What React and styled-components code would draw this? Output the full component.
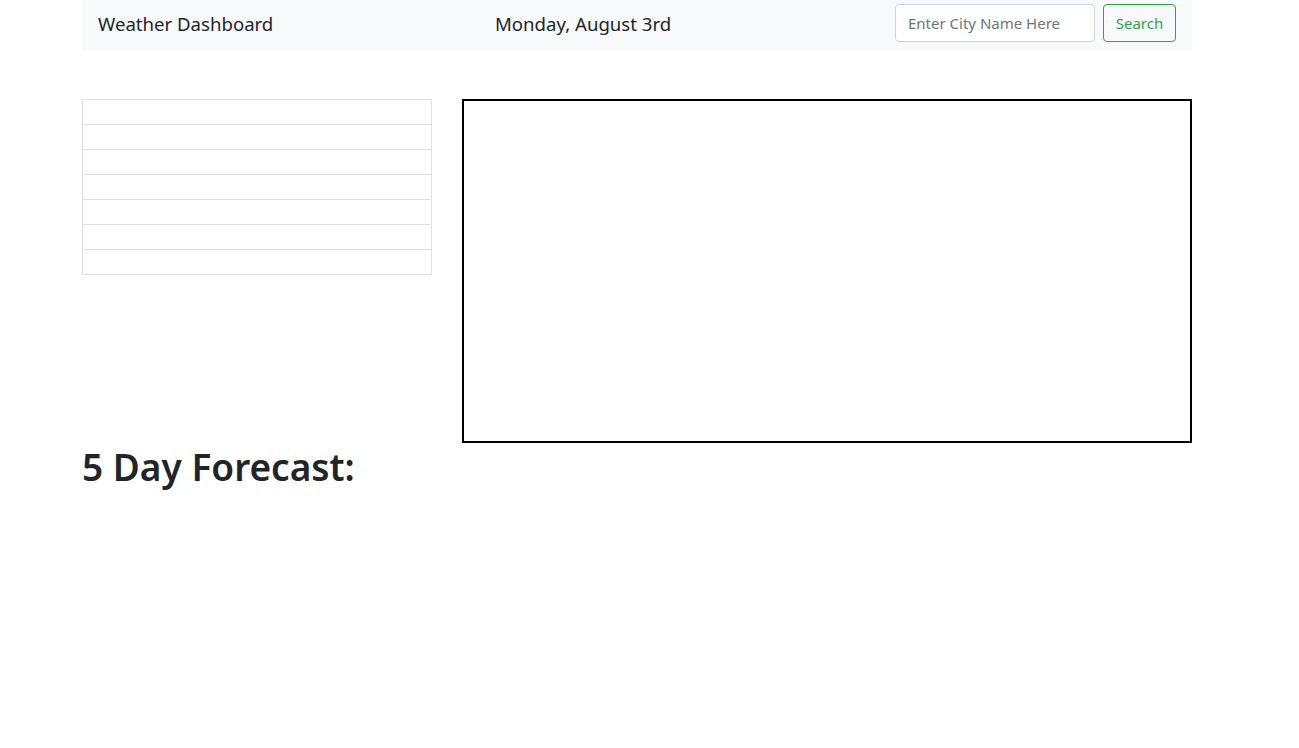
import React from 'react'
import styled, { createGlobalStyle } from 'styled-components';

const Global = createGlobalStyle`
  body {
    margin: 0;
    background: #fff;
    font-family: "Noto Sans", "Open Sans", sans-serif;
    color: #212529;
  }
`;

const Page = styled.div`
  width: 1110px;
  margin-left: 82px;
`;

const Navbar = styled.nav`
  height: 50px;
  background-color: #f8f9fa;
  display: flex;
  align-items: flex-start;
  padding: 0 16px;
  box-sizing: border-box;
`;

const NavText = styled.span`
  font-size: 18.6px;
  line-height: 48px;
  width: ${p => p.width}px;
  flex-shrink: 0;
  white-space: nowrap;
`;

const SearchForm = styled.form`
  margin-left: auto;
  display: flex;
  gap: 8px;
  padding-top: 4px;
`;

const CityInput = styled.input`
  width: 200px;
  height: 38px;
  box-sizing: border-box;
  border: 1px solid #ced4da;
  border-radius: 4px;
  padding: 6px 12px;
  font-family: inherit;
  font-size: 15px;
  color: #495057;
  background: #fff;
  &::placeholder { color: #6c757d; }
`;

const SearchButton = styled.button`
  width: 73px;
  height: 38px;
  box-sizing: border-box;
  border: 1px solid #28a745;
  border-radius: 4px;
  background: transparent;
  color: #28a745;
  font-family: inherit;
  font-size: 15px;
  padding: 0;
`;

const Main = styled.div`
  margin-top: 49px;
  display: flex;
  gap: 30px;
  align-items: flex-start;
`;

const CityList = styled.ul`
  list-style: none;
  margin: 0;
  padding: 0;
  width: 350px;
`;

const CityItem = styled.li`
  height: 25px;
  box-sizing: border-box;
  border: 1px solid #dfdfdf;
  & + & { border-top: none; }
  &:first-child { height: 26px; }
`;

const CurrentWeather = styled.div`
  width: 730px;
  height: 344px;
  box-sizing: border-box;
  border: 2px solid #000;
`;

const Heading = styled.h1`
  margin: 0;
  font-size: 37px;
  font-weight: 600;
  line-height: 48px;
`;

export default function App() {
  return (
    <Page>
      <Global />
      <Navbar>
        <NavText width={397}>Weather Dashboard</NavText>
        <NavText>Monday, August 3rd</NavText>
        <SearchForm onSubmit={e => e.preventDefault()}>
          <CityInput placeholder="Enter City Name Here" />
          <SearchButton type="submit">Search</SearchButton>
        </SearchForm>
      </Navbar>
      <Main>
        <CityList>
          {[0, 1, 2, 3, 4, 5, 6].map(i => <CityItem key={i} />)}
        </CityList>
        <CurrentWeather />
      </Main>
      <Heading>5 Day Forecast:</Heading>
    </Page>
  )
}
